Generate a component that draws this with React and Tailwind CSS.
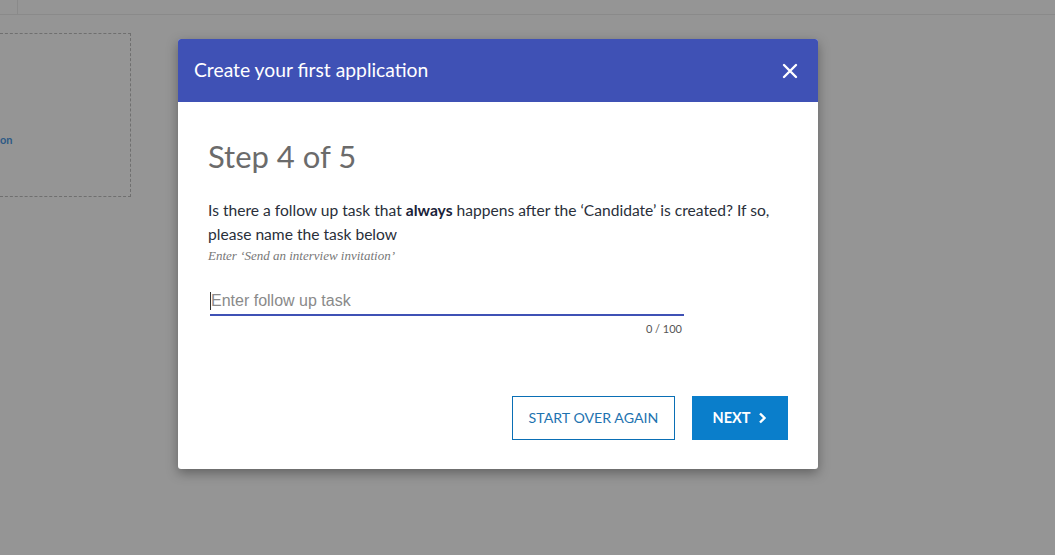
import React from "react";

export default function App() {
  return (
    <div className="relative w-[1055px] h-[555px] overflow-hidden bg-[#959595]" style={{ fontFamily: "Lato, 'Open Sans', sans-serif" }}>
      {/* background page */}
      <div className="h-[15px] border-b border-[#8a8a8a] flex">
        <div className="w-[18px] border-r border-[#8a8a8a]" />
      </div>
      <div className="mt-[18px] w-[131px] h-[164px] border border-dashed border-[#6f6f6f] border-l-0 pt-[92px]">
        <span className="text-[11px] font-bold text-[#2e5a85]">on</span>
      </div>

      {/* modal */}
      <div className="absolute left-[178px] top-[39px] w-[640px] h-[430px] bg-white rounded-[3px] shadow-[0_4px_12px_rgba(0,0,0,0.35)] overflow-hidden flex flex-col">
        <div className="h-[63px] bg-[#3f51b5] flex items-center justify-between pl-[16px] pr-[20px]">
          <span className="text-white text-[19.3px]">Create your first application</span>
          <svg width="16" height="16" viewBox="0 0 16 16" className="text-white">
            <path d="M2 2 L14 14 M14 2 L2 14" stroke="currentColor" strokeWidth="2.4" strokeLinecap="round" />
          </svg>
        </div>
        <div className="flex-1 pl-[30px] pr-[30px] pt-[34px] flex flex-col">
          <h1 className="text-[31px] leading-[40px] text-[#6b6b6b]">Step 4 of 5</h1>
          <p className="mt-[22px] text-[15.6px] leading-[24px] text-[#2a2f3a]">
            Is there a follow up task that <b className="font-bold text-[#1a2238]">always</b> happens after the ‘Candidate’ is created? If so, please name the task below
          </p>
          <p className="mt-[3px] text-[13px] leading-[14px] italic text-[#777]" style={{ fontFamily: "'Liberation Serif', serif" }}>
            Enter ‘Send an interview invitation’
          </p>
          <div className="mt-[25px] ml-[2px] w-[474px]">
            <div className="h-[28px] border-b-2 border-[#3f51b5] flex items-center">
              <span className="w-px h-[18px] bg-[#333]" />
              <span className="text-[16px] text-[#8a8a8a]" style={{ fontFamily: "'Liberation Sans', Arial, sans-serif" }}>Enter follow up task</span>
            </div>
            <div className="mt-[5px] text-right text-[11px] text-[#555] pr-[2px]">0 / 100</div>
          </div>
          <div className="mt-auto mb-[29px] flex justify-end gap-[17px]">
            <button className="h-[44px] w-[163px] border border-[#0a6fb5] text-[#1e73b0] text-[14.2px]">START OVER AGAIN</button>
            <button className="h-[44px] w-[96px] bg-[#0a7ecb] text-white text-[14.5px] font-bold flex items-center justify-center gap-[8px]">
              NEXT
              <svg width="9" height="12" viewBox="0 0 9 12">
                <path d="M2 1.5 L6.5 6 L2 10.5" fill="none" stroke="white" strokeWidth="2.4" />
              </svg>
            </button>
          </div>
        </div>
      </div>
    </div>
  );
}
